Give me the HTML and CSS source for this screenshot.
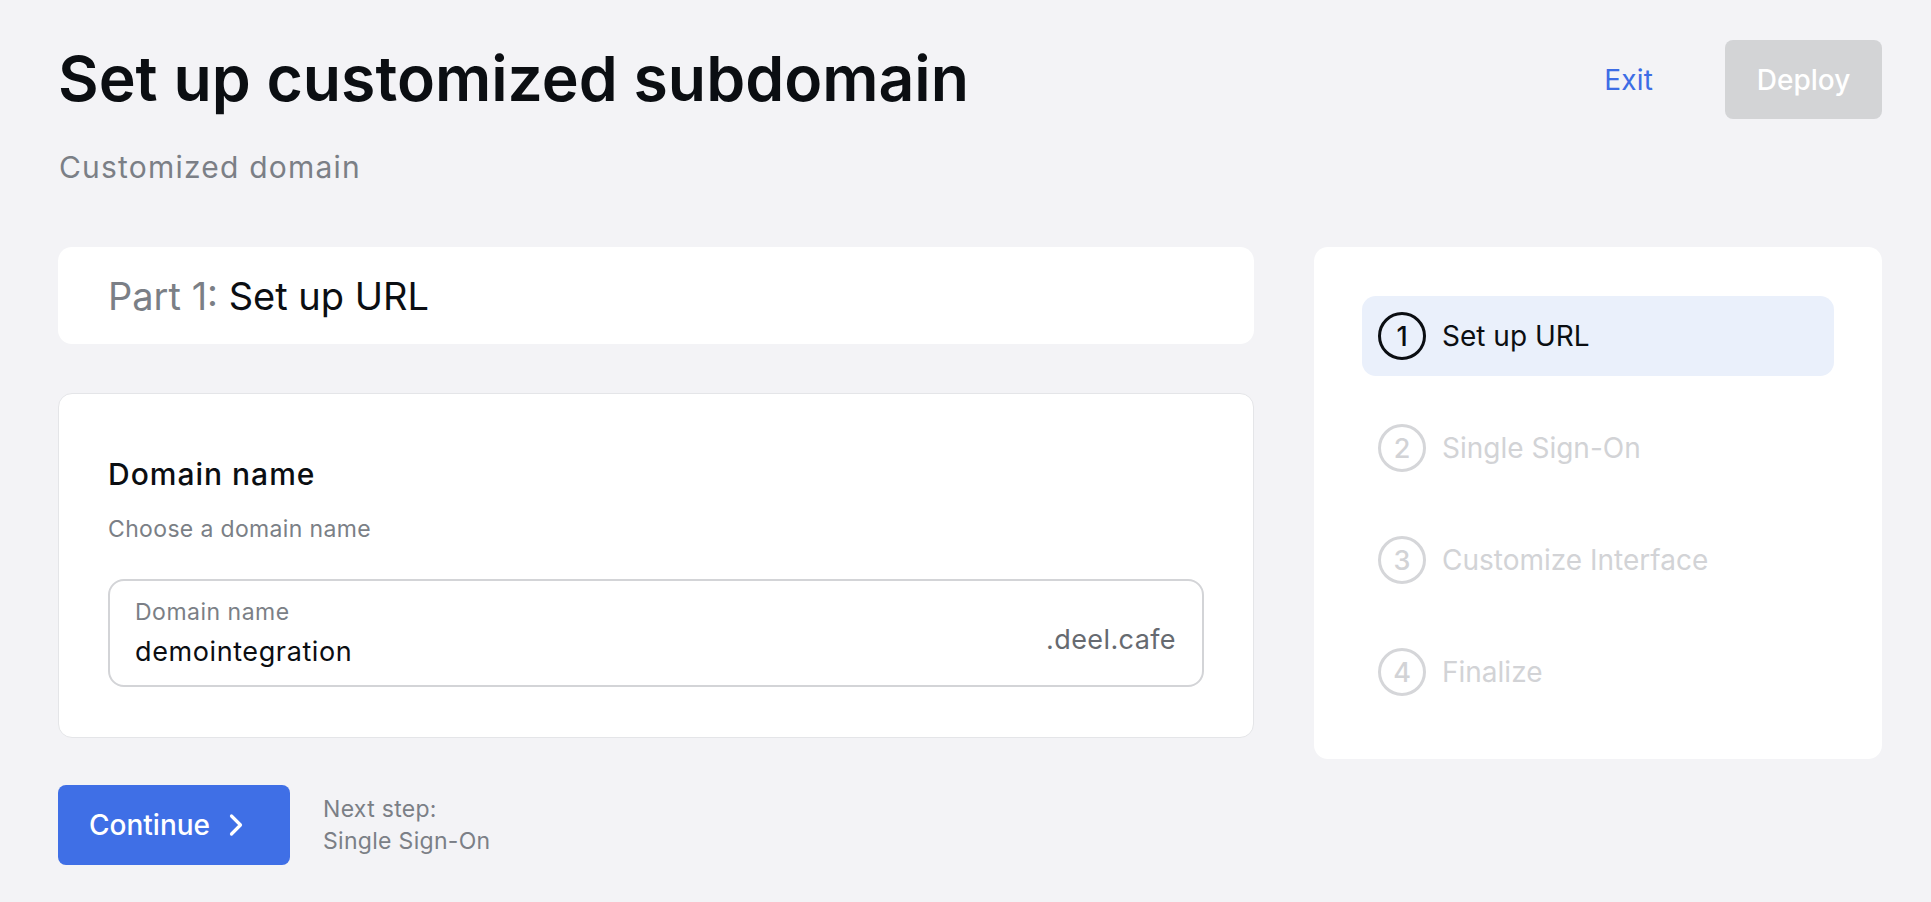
FILE: index.html
```html
<!DOCTYPE html>
<html lang="en">
<head>
<meta charset="utf-8">
<title>Set up customized subdomain</title>
<link rel="stylesheet" href="styles.css">
</head>
<body>
<div class="page">
  <header class="header">
    <div class="titles">
      <h1 class="title">Set up customized subdomain</h1>
      <p class="subtitle">Customized domain</p>
    </div>
    <div class="actions">
      <a class="exit" href="#">Exit</a>
      <button class="deploy" type="button">Deploy</button>
    </div>
  </header>

  <main class="main">
    <section class="left">
      <div class="card part-card">
        <span class="part-label">Part 1:</span>&nbsp;<span class="part-name">Set up URL</span>
      </div>

      <div class="card domain-card">
        <h2 class="domain-title">Domain name</h2>
        <p class="domain-desc">Choose a domain name</p>
        <div class="field">
          <div class="field-main">
            <span class="field-label">Domain name</span>
            <span class="field-value">demointegration</span>
          </div>
          <span class="field-suffix">.deel.cafe</span>
        </div>
      </div>

      <div class="continue-row">
        <button class="continue" type="button">
          <span>Continue</span>
          <svg class="chev" width="16" height="24" viewBox="0 0 16 24" fill="none"><path d="M3.5 3 L12.5 12 L3.5 21" stroke="#fff" stroke-width="3.2" stroke-linecap="round" stroke-linejoin="round"/></svg>
        </button>
        <div class="next">
          <span>Next step:</span>
          <span>Single Sign-On</span>
        </div>
      </div>
    </section>

    <aside class="card steps">
      <div class="step active"><span class="num">1</span><span class="step-name">Set up URL</span></div>
      <div class="step"><span class="num">2</span><span class="step-name">Single Sign-On</span></div>
      <div class="step"><span class="num">3</span><span class="step-name">Customize Interface</span></div>
      <div class="step"><span class="num">4</span><span class="step-name">Finalize</span></div>
    </aside>
  </main>
</div>
</body>
</html>
```

FILE: styles.css
```css
* { box-sizing: border-box; }
html, body { margin: 0; padding: 0; }
body {
  background: #f3f3f6;
  font-family: Inter, "Noto Sans", "Liberation Sans", sans-serif;
  color: #0b0e12;
}
.page {
  padding: 40px 49px 0 58px;
}
.header {
  display: flex;
  justify-content: space-between;
  align-items: flex-start;
}
.title {
  margin: 2px 0 0 0;
  font-size: 62.5px;
  line-height: 72px;
  font-weight: 600;
}
.subtitle {
  margin: 36px 0 0 1px;
  font-size: 30px;
  line-height: 34px;
  letter-spacing: 1.2px;
  color: #7b7f86;
}
.actions {
  display: flex;
  align-items: center;
  gap: 72px;
}
.exit {
  color: #3d6de5;
  text-decoration: none;
  font-size: 28px;
  letter-spacing: 0.2px;
}
.deploy {
  width: 157px;
  height: 79px;
  border: 0;
  border-radius: 8px;
  background: #d3d4d6;
  color: #fff;
  font-family: inherit;
  font-size: 28px;
  font-weight: 500;
}
.main {
  display: grid;
  grid-template-columns: 1fr 568px;
  gap: 60px;
  margin-top: 63px;
  align-items: start;
}
.left {
  display: flex;
  flex-direction: column;
}
.card {
  background: #fff;
  border-radius: 14px;
}
.part-card {
  height: 97px;
  display: flex;
  align-items: center;
  padding: 0 50px;
  font-size: 38px;
}
.part-label { color: #7b7f86; }
.part-name { color: #0b0e12; }
.domain-card {
  margin-top: 49px;
  border: 1px solid #e4e5e8;
  padding: 63px 49px 50px 49px;
}
.domain-title {
  margin: 0;
  font-size: 30px;
  line-height: 34px;
  font-weight: 500;
  letter-spacing: 1px;
}
.domain-desc {
  margin: 25px 0 0 0;
  font-size: 23px;
  line-height: 26px;
  letter-spacing: 0.35px;
  color: #7b7f86;
}
.field {
  margin-top: 37px;
  height: 108px;
  border: 2px solid #d3d4d7;
  border-radius: 16px;
  display: flex;
  justify-content: space-between;
  align-items: center;
  padding: 0 26px 0 25px;
}
.field-main {
  display: flex;
  flex-direction: column;
  gap: 12px;
}
.field-label {
  font-size: 23px;
  line-height: 26px;
  letter-spacing: 0.5px;
  color: #7b7f86;
}
.field-value {
  font-size: 27px;
  line-height: 30px;
  letter-spacing: 0.6px;
  color: #0b0e12;
}
.field-suffix {
  font-size: 27px;
  line-height: 30px;
  letter-spacing: 0.4px;
  color: #666a70;
  margin-top: 14px;
}
.continue-row {
  margin-top: 47px;
  display: flex;
  align-items: center;
  gap: 33px;
}
.continue {
  width: 232px;
  height: 80px;
  border: 0;
  border-radius: 8px;
  background: #3f6fe6;
  color: #fff;
  font-family: inherit;
  font-size: 28px;
  font-weight: 500;
  display: flex;
  align-items: center;
  padding: 0 0 0 31px;
  gap: 18px;
}
.chev { display: block; }
.next {
  display: flex;
  flex-direction: column;
  font-size: 23px;
  line-height: 32px;
  letter-spacing: 0.3px;
  color: #7b7f86;
}
.steps {
  padding: 49px 48px 47px 48px;
  display: flex;
  flex-direction: column;
  gap: 32px;
}
.step {
  height: 80px;
  border-radius: 14px;
  display: flex;
  align-items: center;
  padding: 0 16px;
  gap: 16px;
  color: #d2d3d6;
  font-size: 28px;
}
.step.active {
  background: #eaf0fb;
  color: #0b0e12;
}
.num {
  width: 48px;
  height: 48px;
  border-radius: 50%;
  border: 3.5px solid currentColor;
  display: flex;
  align-items: center;
  justify-content: center;
  font-size: 27px;
  font-weight: 500;
}
.step:not(.active) .num { border-color: #d5d6d9; }
```
